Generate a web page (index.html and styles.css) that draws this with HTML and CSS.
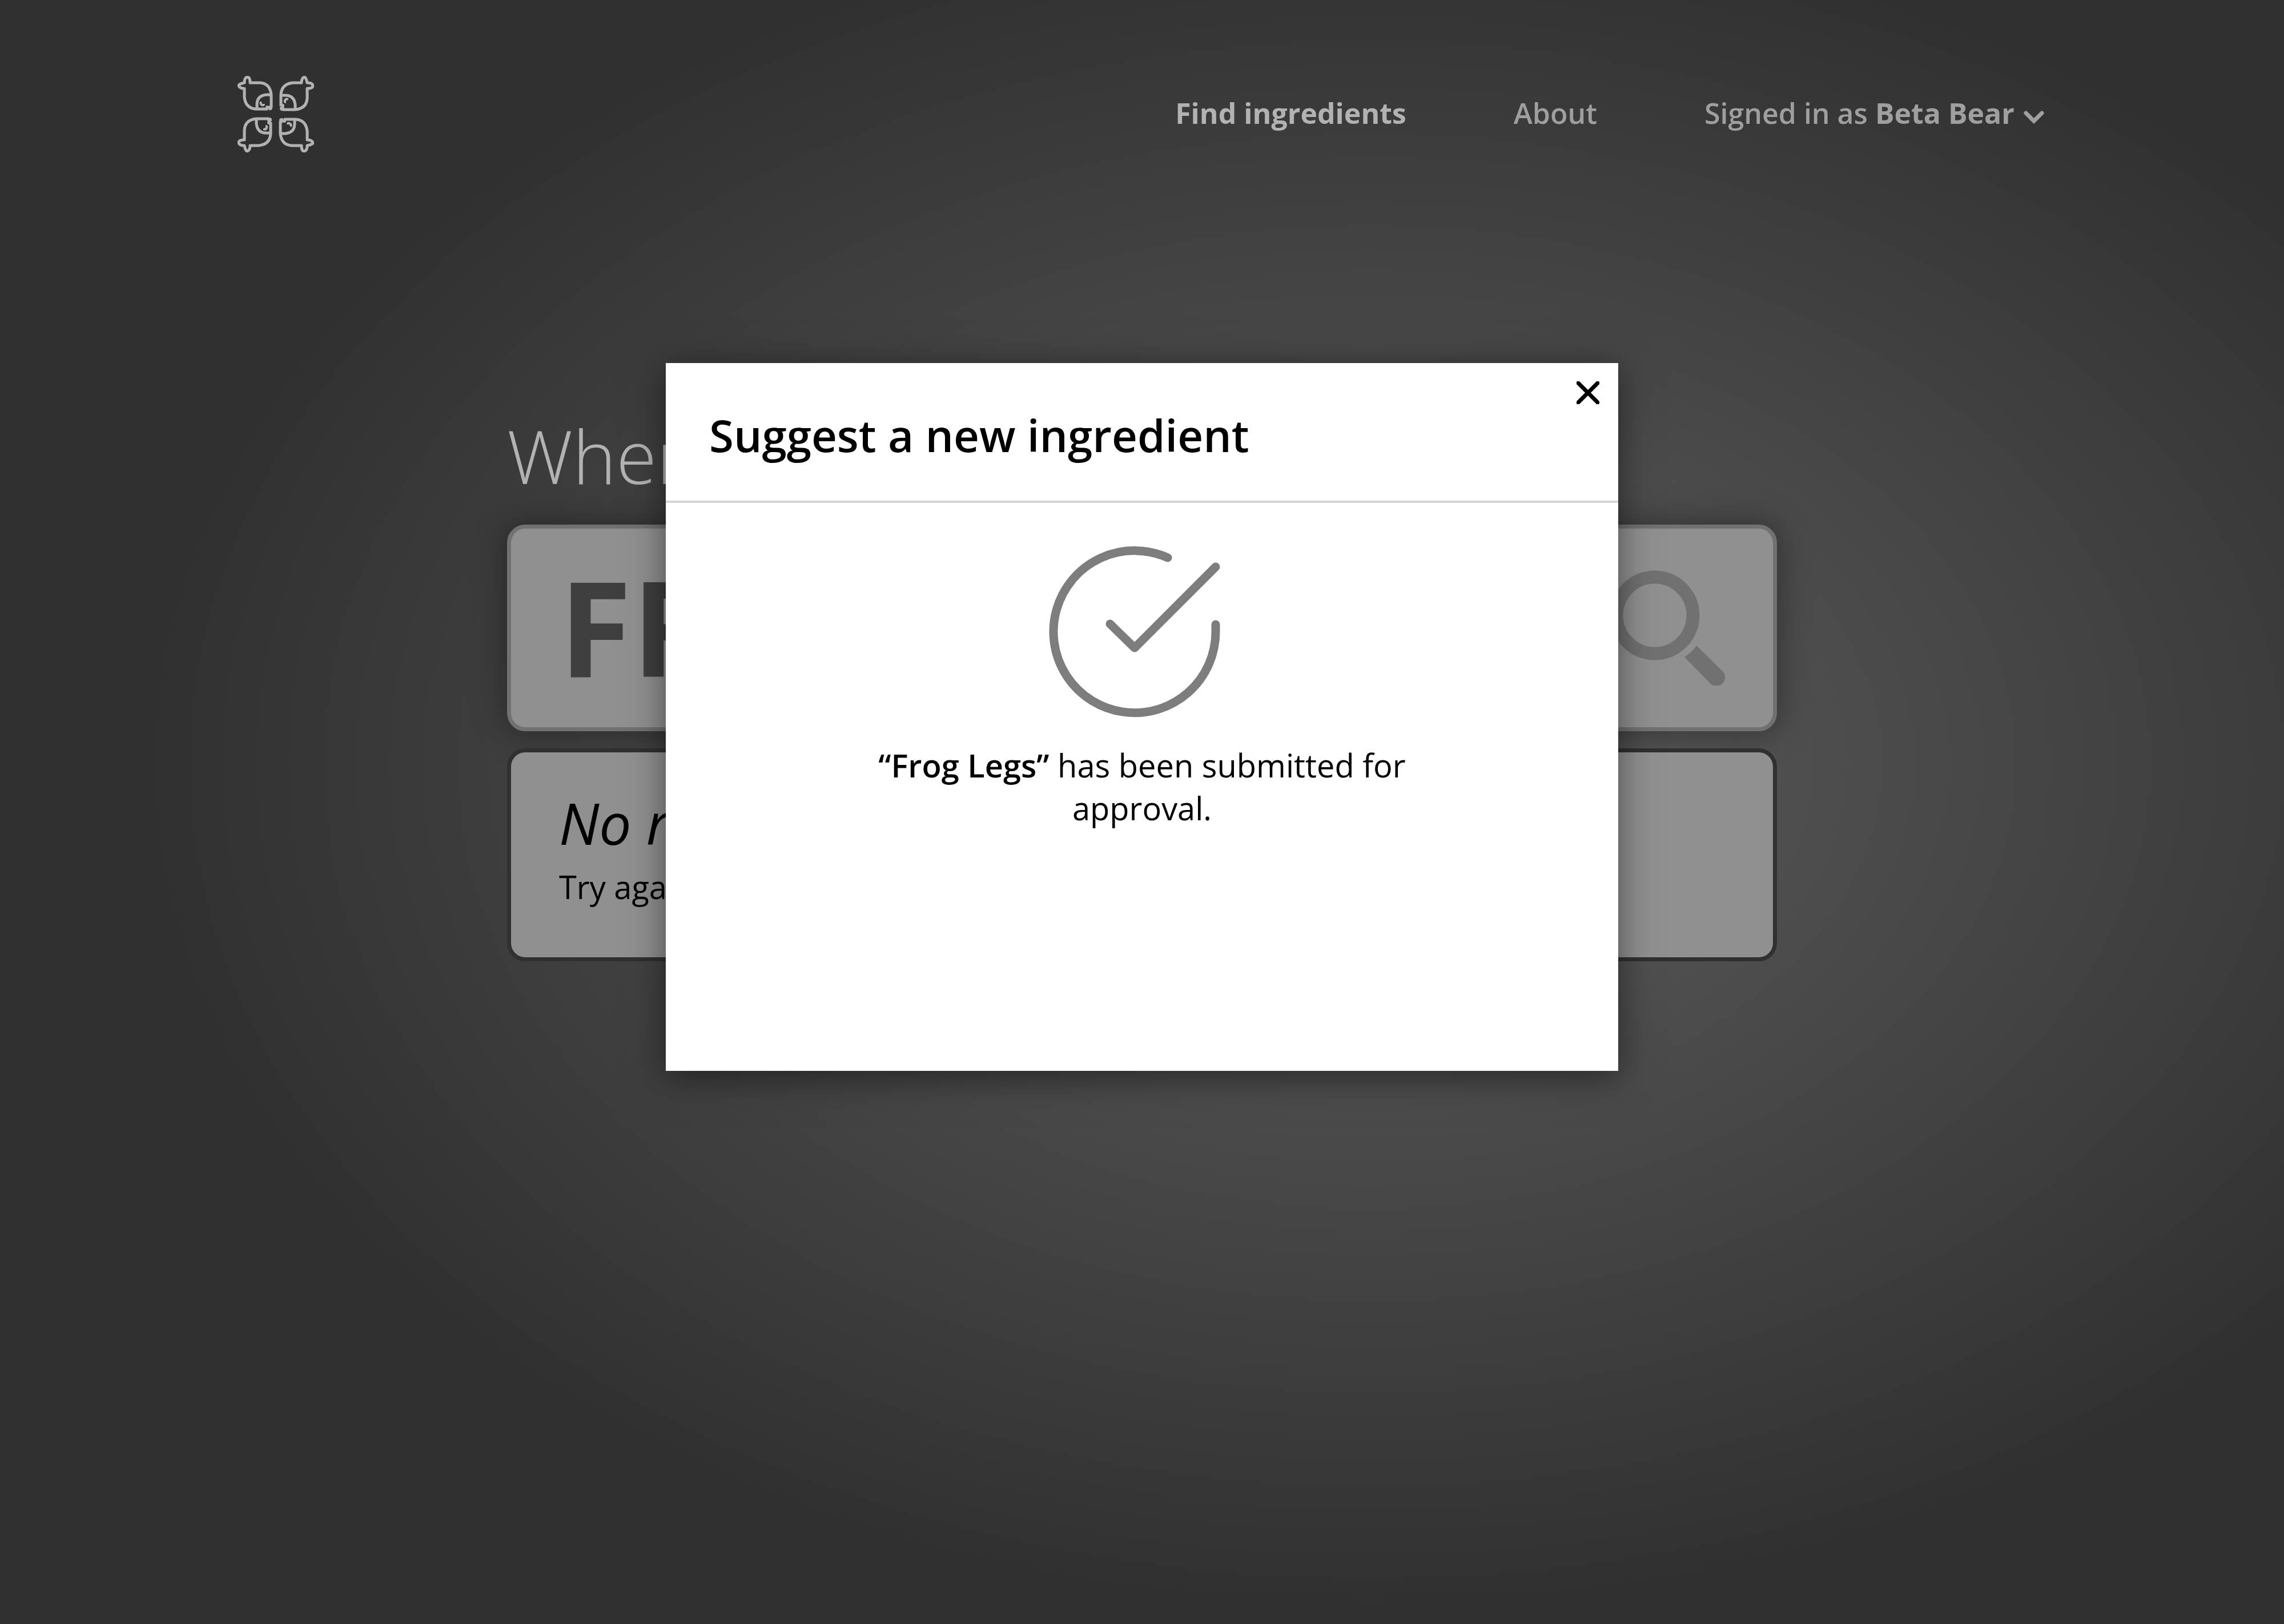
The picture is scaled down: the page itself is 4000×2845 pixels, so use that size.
FILE: index.html
```html
<!DOCTYPE html>
<html lang="en">
<head>
<meta charset="utf-8">
<title>Find ingredients</title>
<link rel="stylesheet" href="styles.css">
</head>
<body>
<div class="page">
  <header class="site-header">
    <a class="logo" href="#" aria-label="Home">
      <svg class="logo-mark" viewBox="0 0 134 134" aria-hidden="true">
        <defs>
          <g id="bud">
            <path d="M59 55 V33 Q57 13 39 12 H22 Q22 2 17 2 Q12 3 12 12 Q2 14 2 17 Q4 22 12 22 V37 Q14 57 33 58 H53"/>
            <path d="M59 33 H50 Q34 35 34 50 V58"/>
            <path class="logo-dot" d="M39 45 Q43 44 43 49 H48 Q48 54 43 53 Q37 51 39 45 Z"/>
            <circle class="logo-dot" cx="52" cy="55" r="3"/>
            <circle class="logo-dot" cx="57" cy="56" r="4"/>
          </g>
        </defs>
        <use href="#bud"/>
        <use href="#bud" transform="translate(134 0) rotate(90)"/>
        <use href="#bud" transform="rotate(180 67 67)"/>
        <use href="#bud" transform="translate(0 134) rotate(-90)"/>
      </svg>
    </a>
    <nav class="nav">
      <a class="nav-link nav-current" href="#">Find ingredients</a>
      <a class="nav-link" href="#">About</a>
      <button class="nav-link account" type="button">
        <span>Signed in as <b>Beta Bear</b></span>
        <svg class="chevron" viewBox="0 0 36 38" aria-hidden="true"><path d="M4 19 L18 33 L32 19"/></svg>
      </button>
    </nav>
  </header>
  <main class="search">
    <label class="search-title" for="query">Where</label>
    <form class="search-box">
      <input class="search-input" id="query" type="text" value="FROG LEGS">
      <button class="search-button" type="button" aria-label="Search">
        <svg class="search-icon" viewBox="0 0 228 202" aria-hidden="true">
          <circle cx="105" cy="79" r="67"/>
          <path class="grip" d="M157 152 Q170 144 178 132 L224 177 A15 15 0 0 1 202 198 Z"/>
        </svg>
      </button>
    </form>
    <section class="results">
      <p class="results-title">No results</p>
      <p class="results-hint">Try again</p>
    </section>
  </main>
</div>
<div class="overlay">
  <section class="modal" role="dialog" aria-modal="true" aria-labelledby="modal-title">
    <header class="modal-header">
      <h1 class="modal-title" id="modal-title">Suggest a new ingredient</h1>
      <button class="close" type="button" aria-label="Close">
        <svg class="close-icon" viewBox="0 0 40 40" aria-hidden="true"><path d="M3 3 L37 37 M37 3 L3 37"/></svg>
      </button>
    </header>
    <div class="modal-body">
      <svg class="success" viewBox="0 0 326 300" aria-hidden="true">
        <path d="M208 20 A142 142 0 1 0 292 150 V137"/>
        <path d="M107 136 L150 178 L292 36"/>
      </svg>
      <p class="message"><b>“Frog Legs”</b> has been submitted for approval.</p>
    </div>
  </section>
</div>
</body>
</html>
```
FILE: styles.css
```css
* { box-sizing: border-box; }
body {
  margin: 0;
  background: #303030;
  color: #000;
  font-family: "Open Sans", "Noto Sans", sans-serif;
  font-size: 56px;
}
button, input { font: inherit; color: inherit; border: 0; background: none; padding: 0; }
a { color: inherit; text-decoration: none; }
p, h1 { margin: 0; }
svg { display: block; fill: none; stroke: currentColor; }

.page {
  min-height: 100vh;
  background: radial-gradient(ellipse 2160px 1490px at 60% 47%, #5e5e5e, #303030);
}

.site-header {
  display: flex;
  align-items: center;
  justify-content: space-between;
  height: 400px;
  padding: 0 420px 0 416px;
}
.logo { color: #b2b2b2; }
.logo-mark { width: 134px; height: 134px; stroke-width: 5; stroke-linejoin: round; }
.logo-dot { fill: currentColor; stroke: none; }
.nav { display: flex; align-items: center; gap: 188px; padding-bottom: 4px; font-size: 50px; color: #9f9f9f; }
.nav-link { font-weight: 600; }
.nav-current { font-weight: 700; color: #b2b2b2; }
.account { display: flex; align-items: center; gap: 16px; }
.account b { font-weight: 700; }
.chevron { width: 36px; height: 38px; stroke-width: 7; stroke-linecap: round; }

.search { width: 2224px; max-width: 100%; margin: 0 auto; padding-top: 306px; }
.search-title {
  display: block;
  font-size: 129px;
  line-height: 184px;
  font-weight: 300;
  color: #b2b2b2;
}
.search-box {
  display: flex;
  align-items: center;
  height: 362px;
  margin-top: 29px;
  padding: 0 84px;
  border: 7px solid #717171;
  border-radius: 32px;
  background: #909090;
  box-shadow: 0 0 60px rgba(0, 0, 0, .4);
}
.search-input { flex: 1; min-width: 0; padding-bottom: 8px; font-size: 232px; font-weight: 700; color: #3f3f3f; }
.search-button { color: #717171; }
.search-icon { width: 228px; height: 202px; stroke-width: 23; }
.grip { fill: currentColor; stroke: none; }
.results {
  height: 373px;
  margin-top: 30px;
  padding: 54px 84px;
  border: 7px solid #303030;
  border-radius: 32px;
  background: #909090;
}
.results-title { font-size: 100px; line-height: 138px; font-style: italic; }
.results-hint { margin-top: 6px; line-height: 75px; }

.overlay { position: absolute; inset: 0; display: flex; justify-content: center; align-items: flex-start; padding-top: 636px; }
.modal { width: 1668px; max-width: 100%; min-height: 1240px; background: #fff; box-shadow: 0 10px 60px rgba(0, 0, 0, .5); }
.modal-header {
  display: flex;
  justify-content: space-between;
  align-items: flex-start;
  height: 245px;
  padding: 32px 33px 0 76px;
  border-bottom: 4px solid #d6d6d6;
}
.modal-title { padding-top: 40px; font-size: 78px; line-height: 108px; font-weight: 600; }
.close-icon { width: 40px; height: 40px; stroke-width: 7; stroke-linecap: round; }
.modal-body { display: flex; flex-direction: column; align-items: center; padding-top: 76px; }
.success { width: 326px; height: 300px; color: #7d7d7d; stroke-width: 15; stroke-linecap: round; stroke-linejoin: round; }
.message { width: 1000px; max-width: 100%; margin-top: 46px; line-height: 75px; text-align: center; }
.message b { font-weight: 600; }
```
